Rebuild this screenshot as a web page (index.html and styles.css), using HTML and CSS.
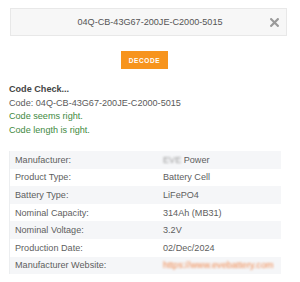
FILE: index.html
```html
<!DOCTYPE html>
<html>
<head>
<meta charset="utf-8">
<link rel="stylesheet" href="styles.css">
</head>
<body>
<div class="page">
  <div class="code-box">
    <span class="code-text">04Q-CB-43G67-200JE-C2000-5015</span>
    <svg class="clear" width="9" height="9" viewBox="0 0 9 9"><path d="M1.2 1.2L7.8 7.8M7.8 1.2L1.2 7.8" stroke="#9a9a9a" stroke-width="2.2" stroke-linecap="square"/></svg>
  </div>
  <div class="actions"><button class="decode">DECODE</button></div>
  <div class="check">
    <div class="check-title">Code Check...</div>
    <div>Code: 04Q-CB-43G67-200JE-C2000-5015</div>
    <div class="ok">Code seems right.</div>
    <div class="ok">Code length is right.</div>
  </div>
  <table class="info">
    <tr><td class="label">Manufacturer:</td><td><span class="blur">EVE</span> Power</td></tr>
    <tr><td class="label">Product Type:</td><td>Battery Cell</td></tr>
    <tr><td class="label">Battery Type:</td><td>LiFePO4</td></tr>
    <tr><td class="label">Nominal Capacity:</td><td>314Ah (MB31)</td></tr>
    <tr><td class="label">Nominal Voltage:</td><td>3.2V</td></tr>
    <tr><td class="label">Production Date:</td><td>02/Dec/2024</td></tr>
    <tr><td class="label">Manufacturer Website:</td><td><span class="link">https://www.evebattery.com</span></td></tr>
  </table>
</div>
</body>
</html>
```
FILE: styles.css
```css
html, body { margin: 0; padding: 0; background: #fff; }
body { font-family: "Liberation Sans", Arial, sans-serif; font-size: 9.1px; color: #5a5a5a; }
.page { padding: 8px 13px 0 9px; }
.code-box {
  margin-left: 1px;
  height: 28px;
  box-sizing: border-box;
  background: #f7f7f7;
  border: 1px solid #e8e8e8;
  display: flex;
  align-items: center;
  padding: 0 7px 0 23px;
  gap: 4px;
}
.code-text { flex: 1; text-align: center; color: #555; }
.clear { flex: none; }
.actions { display: flex; justify-content: center; padding: 15px 7px 0 0; }
.decode {
  width: 47px; height: 18px;
  border: 0; padding: 0;
  background: #f7941d;
  color: #fff;
  font-family: "Liberation Sans", Arial, sans-serif;
  font-weight: bold;
  font-size: 6.5px;
  letter-spacing: 0.6px;
}
.check { padding-top: 14px; line-height: 13.5px; color: #5a5a5a; }
.check-title { font-weight: bold; color: #444; }
.ok { color: #3f8a3f; }
.info {
  margin-top: 14px;
  width: 272px;
  border-collapse: collapse;
  border-left: 1px solid #eceef0;
}
.info td { height: 17.6px; padding: 0 5px; line-height: 10px; color: #5e5e5e; }
.info td.label { width: 138px; }
.info tr:nth-child(odd) td { background: #f5f6f8; }
.blur { color: #999; filter: blur(1px); }
.link { color: #f0894e; filter: blur(1px); }
```
